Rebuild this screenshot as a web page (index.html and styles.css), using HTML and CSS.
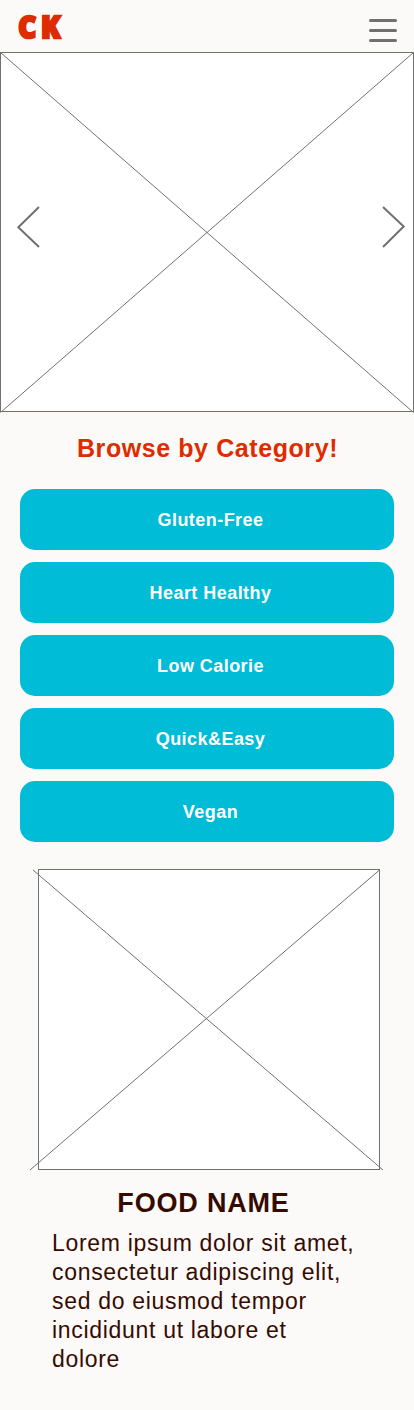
FILE: index.html
```html
<!DOCTYPE html>
<html lang="en">
<head>
<meta charset="utf-8">
<meta name="viewport" content="width=device-width, initial-scale=1">
<title>CK</title>
<link rel="stylesheet" href="styles.css">
</head>
<body>
<header class="topbar">
  <svg class="logo" width="52" height="52" viewBox="0 0 52 52" role="img" aria-label="CK">
    <text class="logo-text" x="1.2" y="38.2" textLength="18" lengthAdjust="spacingAndGlyphs">C</text>
    <text class="logo-text" x="24" y="38.2" textLength="19.4" lengthAdjust="spacingAndGlyphs">K</text>
  </svg>
  <button class="menu" aria-label="Menu"><span></span><span></span><span></span></button>
</header>
<main>
  <section class="hero">
    <svg class="cross" width="414" height="361" viewBox="0 0 414 361">
      <rect x="0.5" y="0.5" width="413" height="359"/>
      <path d="M.5 .5 413.5 360.5M413.5 .5.5 360.5"/>
    </svg>
    <svg class="arrow arrow-prev" width="24" height="44" viewBox="0 0 24 44"><path d="M23 2 2.300 22.3 23 42"/></svg>
    <svg class="arrow arrow-next" width="24" height="44" viewBox="0 0 24 44"><path d="M1 2 21.700 21.5 1 42"/></svg>
  </section>
  <h1 class="heading">Browse by Category!</h1>
  <nav class="categories">
    <a class="category">Gluten-Free</a>
    <a class="category">Heart Healthy</a>
    <a class="category">Low Calorie</a>
    <a class="category">Quick&amp;Easy</a>
    <a class="category">Vegan</a>
  </nav>
  <article class="food">
    <svg class="cross" width="354" height="302" viewBox="0 0 354 302">
      <rect x="8.5" y="0.5" width="341" height="300"/>
      <path d="M3 1 353 301M349.500 1 0 301"/>
    </svg>
    <h2 class="food-name">FOOD NAME</h2>
    <p class="food-text">Lorem ipsum dolor sit amet, consectetur adipiscing elit, sed do eiusmod tempor incididunt ut labore et dolore</p>
  </article>
</main>
</body>
</html>
```
FILE: styles.css
```css
* { box-sizing: border-box; }
body {
  margin: 0;
  height: 1410px;
  overflow: hidden;
  background: #fcfaf8;
  font-family: "Liberation Sans", Arial, sans-serif;
  color: #350b00;
}
.topbar {
  display: flex;
  justify-content: space-between;
  align-items: flex-start;
  height: 52px;
  padding: 0 17px;
}
.logo { display: block; overflow: visible; }
.logo-text {
  font: 900 29.5px "Noto Sans", sans-serif;
  fill: #df2b00;
  stroke: #df2b00;
  stroke-width: 2.4px;
}
.menu {
  display: flex;
  flex-direction: column;
  gap: 7px;
  margin: 19px 0 0;
  padding: 0;
  border: 0;
  background: none;
}
.menu span {
  width: 28px;
  height: 3px;
  border-radius: 1.5px;
  background: #707070;
}
.hero { position: relative; height: 361px; }
.cross { display: block; fill: #fff; stroke: #707070; stroke-width: 1px; }
.arrow {
  position: absolute;
  top: 153px;
  fill: none;
  stroke: #707070;
  stroke-width: 2px;
}
.arrow-prev { left: 16px; }
.arrow-next { right: 8px; }
.heading {
  margin: 0;
  padding: 21px 0 0 1px;
  height: 76px;
  font-size: 25px;
  line-height: 29px;
  letter-spacing: 0.58px;
  text-align: center;
  color: #df2b00;
}
.categories {
  display: flex;
  flex-direction: column;
  gap: 12px;
  padding: 0 20px;
}
.category {
  display: flex;
  align-items: center;
  justify-content: center;
  height: 61px;
  padding: 2px 0 0 7px;
  border-radius: 15px;
  background: #00bcd7;
  color: #fff;
  font-size: 18px;
  font-weight: 700;
  line-height: 21px;
  letter-spacing: 0.45px;
}
.food { padding: 27px 30px 0; }
.food-name {
  margin: 16px 0 0;
  padding-right: 7px;
  font-size: 27px;
  line-height: 32px;
  letter-spacing: 0.81px;
  text-align: center;
}
.food-text {
  width: 305px;
  margin: 10px 0 0 22px;
  font-size: 23px;
  line-height: 29px;
  letter-spacing: 0.69px;
}
```
